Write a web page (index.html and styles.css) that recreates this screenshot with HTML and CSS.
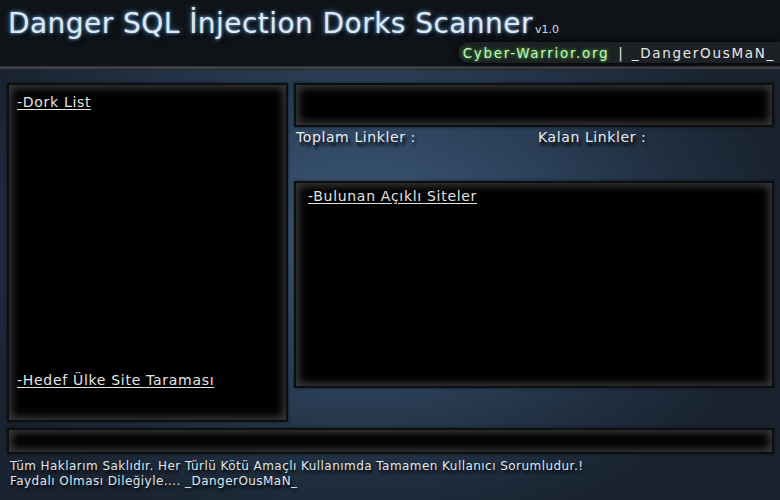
FILE: index.html
```html
<!DOCTYPE html>
<html lang="tr">
<head>
<meta charset="utf-8">
<title>Danger SQL İnjection Dorks Scanner</title>
<link rel="stylesheet" href="styles.css">
</head>
<body>
<div class="app">
  <header class="header">
    <h1 class="title">Danger SQL İnjection Dorks Scanner<span class="ver">v1.0</span></h1>
    <div class="credit"><span class="site">Cyber-Warrior.org</span><span class="sep">|</span><span class="author">_DangerOusMaN_</span></div>
  </header>
  <div class="headline"></div>
  <main class="main">
    <section class="panel left">
      <a class="label">-Dork List</a>
      <a class="label">-Hedef Ülke Site Taraması</a>
    </section>
    <div class="right">
      <div class="panel bar"></div>
      <div class="stats">
        <span class="stat">Toplam Linkler :</span>
        <span class="stat">Kalan Linkler :</span>
      </div>
      <section class="panel results">
        <a class="label">-Bulunan Açıklı Siteler</a>
      </section>
    </div>
  </main>
  <div class="panel status"></div>
  <footer class="footer">
    <p>Tüm Haklarım Saklıdır. Her Türlü Kötü Amaçlı Kullanımda Tamamen Kullanıcı Sorumludur.!</p>
    <p>Faydalı Olması Dileğiyle.... _DangerOusMaN_</p>
  </footer>
</div>
</body>
</html>
```

FILE: styles.css
```css
* { box-sizing: border-box; }
html, body { margin: 0; padding: 0; }
body {
  width: 780px;
  height: 500px;
  overflow: hidden;
  font-family: "DejaVu Sans", Verdana, sans-serif;
  color: #e6e9ee;
  background: #1b2634;
}
.app {
  width: 780px;
  height: 500px;
  background: radial-gradient(ellipse 420px 300px at 360px 240px, #3f5b79 0%, #2e4560 40%, #1f2d3d 80%, #1a2431 100%);
}
.header {
  height: 66px;
  background: #0f1318;
  position: relative;
  padding: 7px 0 0 8px;
}
.headline {
  height: 4px;
  background: linear-gradient(#2c2f33, #46494d 50%, #1b1f24);
}
.title {
  margin: 0;
  font-weight: normal;
  font-size: 28px;
  line-height: 34px;
  color: #dde8f3;
  letter-spacing: 0.45px;
  text-shadow: 0 0 3px #7fa9d3, 0 0 6px #3d6a98, 3px 4px 3px #000;
}
.ver {
  font-size: 11px;
  margin-left: 2px;
  letter-spacing: 0;
  color: #d8dde3;
  text-shadow: none;
}
.credit {
  position: absolute;
  right: 0;
  top: 42px;
  height: 21px;
  padding: 0 5px 0 5px;
  display: flex;
  align-items: center;
  gap: 9px;
  font-size: 13.5px;
  letter-spacing: 1.7px;
  background: #1d2024;
  border-radius: 11px 0 0 11px;
  box-shadow: 0 0 6px #000;
}
.site {
  color: #c8f0c0;
  text-shadow: 0 0 3px #3fae3a, 0 0 5px #2f7f2a;
}
.sep { color: #e8e8e8; letter-spacing: 0; }
.author { color: #e8e8e8; }
.main {
  display: grid;
  grid-template-columns: 281px 480px;
  gap: 6px;
  padding: 13px 0 0 7px;
  height: 352px;
}
.panel {
  background: #000;
  border: 2px solid #0c0e10;
  box-shadow: inset 0 0 9px 3px #3a3a3a, 0 0 3px rgba(0,0,0,0.6);
}
.left {
  height: 339px;
  display: flex;
  flex-direction: column;
  justify-content: space-between;
  padding: 8px 8px 31px 8px;
}
.label {
  color: #e4e4e4;
  font-size: 14px;
  letter-spacing: 0.7px;
  text-decoration: underline;
  text-underline-offset: 2px;
  line-height: 18px;
}
.right {
  display: flex;
  flex-direction: column;
}
.bar { height: 44px; }
.stats {
  display: flex;
  height: 54px;
  padding: 2px 0 0 2px;
  font-size: 14px;
  letter-spacing: 0.6px;
  color: #e8ecf0;
}
.stat {
  text-shadow: 2px 4px 3px #000;
}
.stat:first-child { width: 242px; }
.results {
  height: 207px;
  padding: 3px 12px;
}
.status {
  margin: 6px 0 0 7px;
  width: 767px;
  height: 26px;
}
.footer {
  padding: 5px 0 0 10px;
  font-size: 12px;
  letter-spacing: 0.45px;
  line-height: 15px;
  color: #dfe6ee;
  text-shadow: 1px 3px 3px #000;
}
.footer p { margin: 0; }
```
